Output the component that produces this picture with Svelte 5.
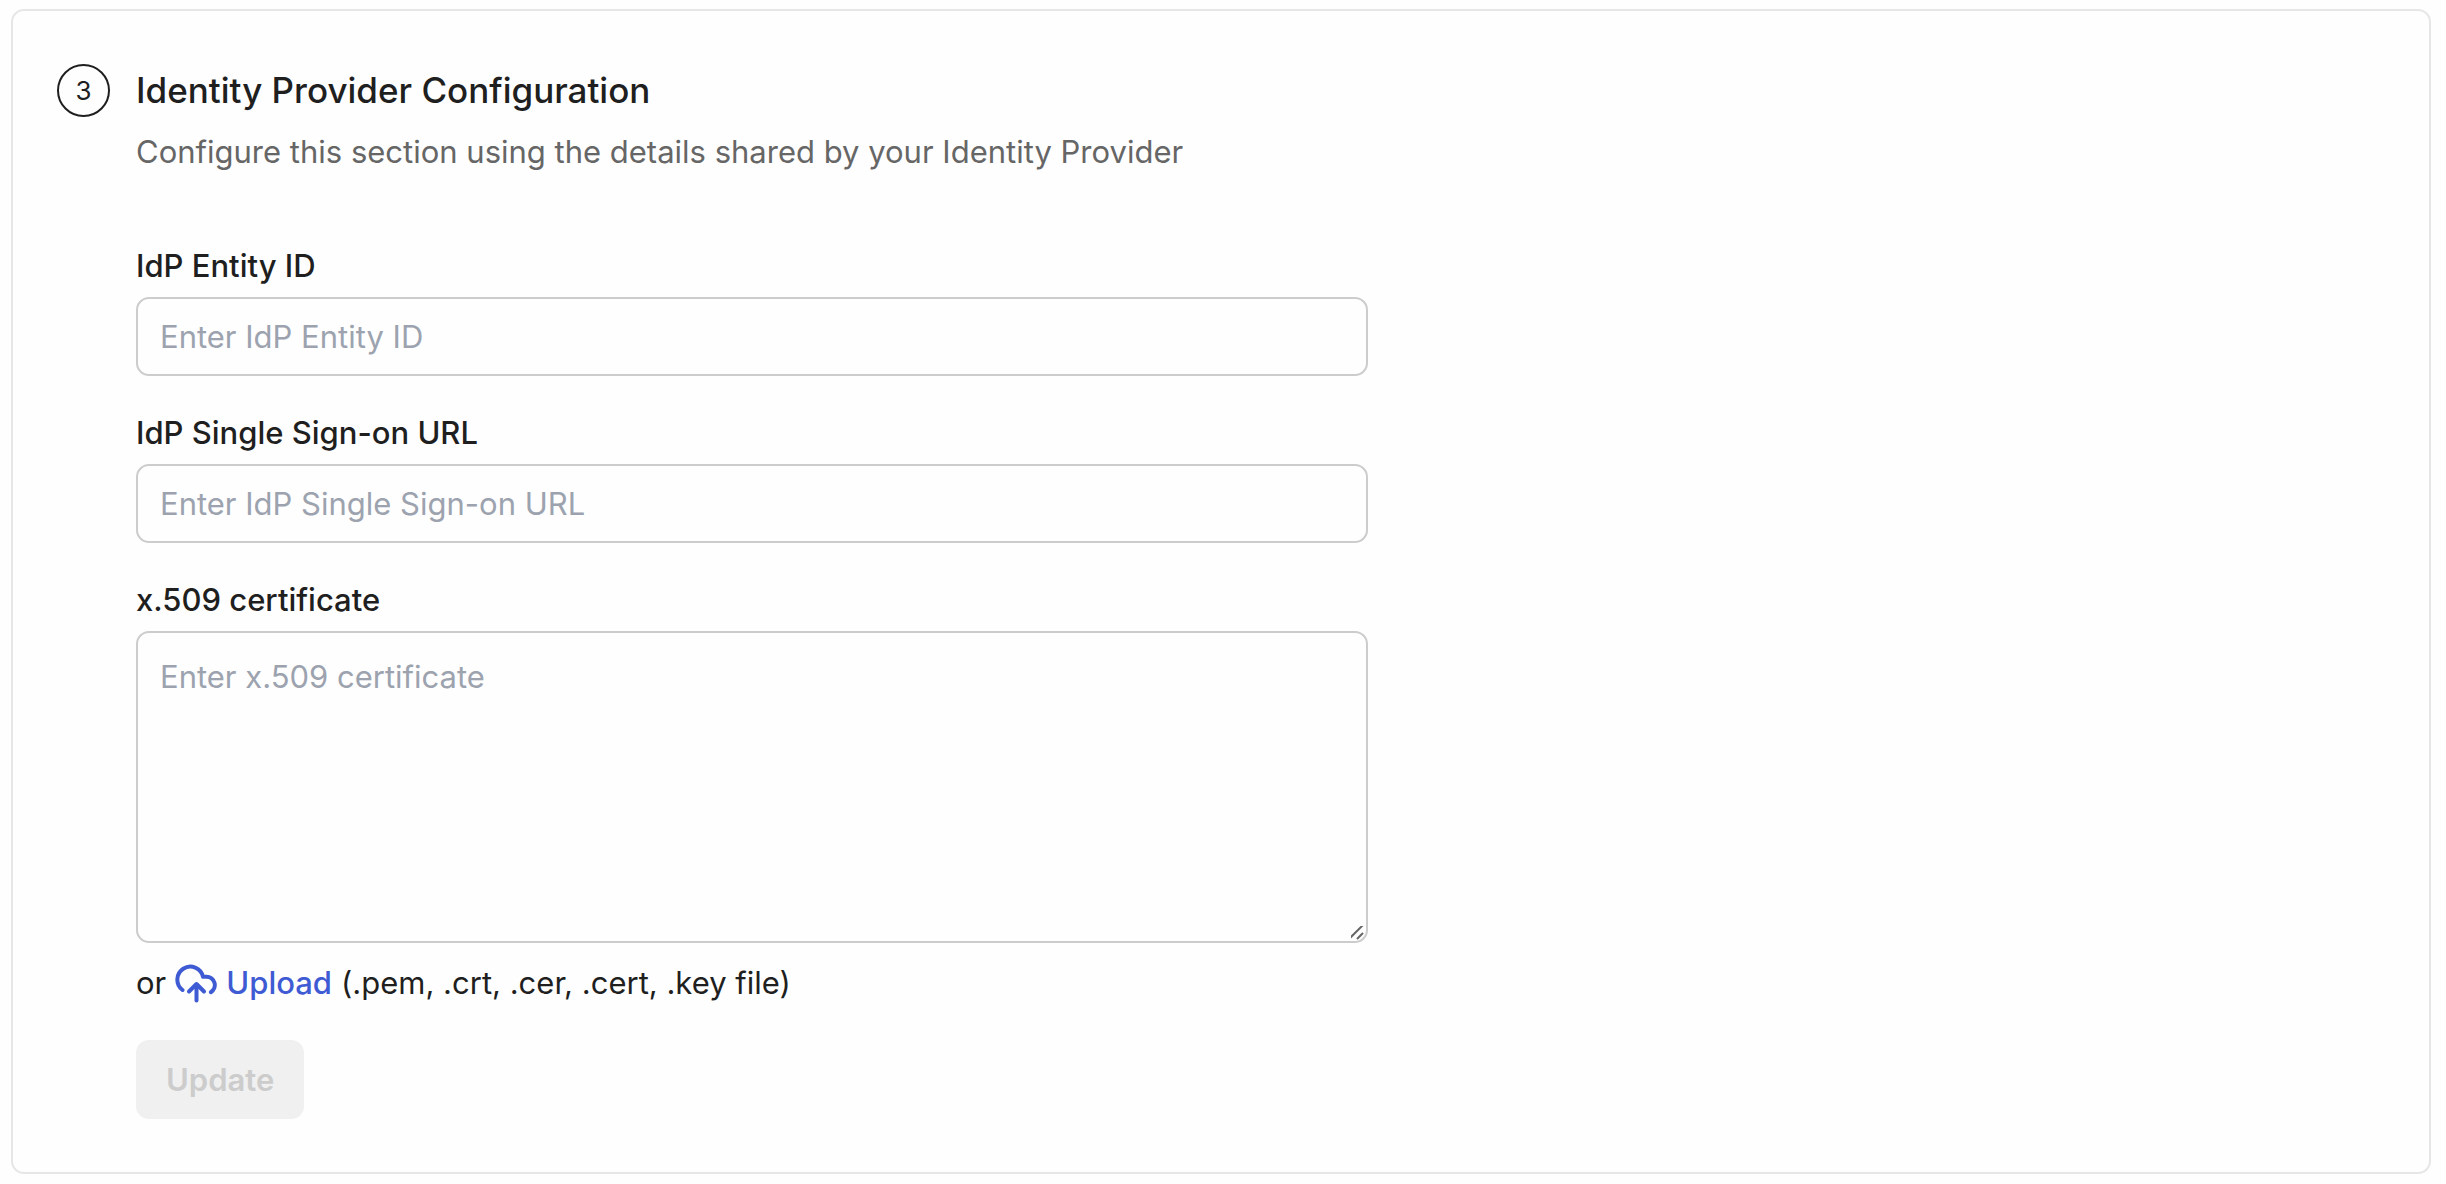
<script lang="ts">
  let entityId = $state('');
  let signOnUrl = $state('');
  let certificate = $state('');
  let fileInput: HTMLInputElement;

  const canUpdate = $derived(
    entityId.trim() !== '' && signOnUrl.trim() !== '' && certificate.trim() !== ''
  );

  async function readCertificate() {
    const file = fileInput.files?.[0];
    if (file) {
      certificate = await file.text();
    }
  }
</script>

<section class="card">
  <div class="step">3</div>

  <div class="content">
    <h2>Identity Provider Configuration</h2>
    <p class="description">
      Configure this section using the details shared by your Identity Provider
    </p>

    <form onsubmit={(e) => e.preventDefault()}>
      <div class="field">
        <label for="entity-id">IdP Entity ID</label>
        <input id="entity-id" type="text" placeholder="Enter IdP Entity ID" bind:value={entityId} />
      </div>

      <div class="field">
        <label for="sign-on-url">IdP Single Sign-on URL</label>
        <input
          id="sign-on-url"
          type="text"
          placeholder="Enter IdP Single Sign-on URL"
          bind:value={signOnUrl}
        />
      </div>

      <div class="field">
        <label for="certificate">x.509 certificate</label>
        <textarea id="certificate" placeholder="Enter x.509 certificate" bind:value={certificate}
        ></textarea>
      </div>

      <div class="upload-row">
        <span>or</span>
        <button type="button" class="upload" onclick={() => fileInput.click()}>
          <svg viewBox="0 0 42 40" aria-hidden="true">
            <path d="M7.5 27A13 13 0 1 1 28 13.7L31.5 13.7A8.4 8.4 0 0 1 35.9 29.2" />
            <path d="M21.5 37.5V21.5M14 28.5L21.5 21L29 28.5" />
          </svg>
          Upload
        </button>
        <span>(.pem, .crt, .cer, .cert, .key file)</span>
        <input
          bind:this={fileInput}
          type="file"
          accept=".pem,.crt,.cer,.cert,.key"
          hidden
          onchange={readCertificate}
        />
      </div>

      <button type="submit" class="update" disabled={!canUpdate}>Update</button>
    </form>
  </div>
</section>

<style>
  :global(body) {
    background: #fefefe;
    color: #1f1f1f;
    font-family: Inter, 'Liberation Sans', sans-serif;
    font-size: 31px;
    line-height: 40px;
  }

  .card {
    display: flex;
    gap: 26px;
    margin: 9px 15px 10px 11px;
    padding: 53px 44px;
    border: 2px solid #e6e6e6;
    border-radius: 13px;
  }

  .step {
    box-sizing: border-box;
    flex: none;
    display: flex;
    align-items: center;
    justify-content: center;
    width: 53px;
    height: 53px;
    border: 2px solid #1f1f1f;
    border-radius: 50%;
    font-size: 26px;
  }

  .content {
    flex: 1;
    min-width: 0;
  }

  h2 {
    margin: 0;
    font-size: 35px;
    font-weight: 500;
    line-height: 53px;
  }

  .description {
    margin: 15px 0 0;
    color: #666;
  }

  form {
    display: flex;
    flex-direction: column;
    align-items: flex-start;
    margin-top: 74px;
  }

  .field {
    display: flex;
    flex-direction: column;
    gap: 11px;
    width: 100%;
    max-width: 1232px;
    margin-bottom: 37px;
  }

  label {
    font-weight: 500;
  }

  .field input,
  textarea {
    box-sizing: border-box;
    width: 100%;
    height: 79px;
    padding: 0 22px;
    border: 2px solid #ccc;
    border-radius: 13px;
    background: transparent;
    color: inherit;
    font: inherit;
  }

  textarea {
    display: block;
    height: 312px;
    padding: 24px 22px;
    resize: vertical;
  }

  textarea::-webkit-scrollbar {
    width: 20px;
  }

  textarea::-webkit-resizer {
    background: url("data:image/svg+xml,%3Csvg xmlns='http://www.w3.org/2000/svg' width='20' height='20'%3E%3Cpath d='M3 18L17 4M11 18L17 12' stroke='%23666' stroke-width='2'/%3E%3C/svg%3E")
      no-repeat right bottom;
  }

  .field input::placeholder,
  textarea::placeholder {
    color: #9ca3af;
    opacity: 1;
  }

  .upload-row {
    display: flex;
    align-items: center;
    gap: 9px;
    margin-top: -17px;
  }

  .upload {
    display: flex;
    align-items: center;
    gap: 9px;
    padding: 0;
    border: 0;
    background: none;
    color: #3e5bd3;
    font: inherit;
    font-weight: 500;
    cursor: pointer;
  }

  .upload svg {
    width: 42px;
    height: 40px;
    fill: none;
    stroke: currentColor;
    stroke-width: 4;
    stroke-linecap: round;
    stroke-linejoin: round;
  }

  .update {
    height: 79px;
    margin-top: 37px;
    padding: 0 30px;
    border: 0;
    border-radius: 13px;
    background: #3e5bd3;
    color: #fff;
    font: inherit;
    font-weight: 600;
    cursor: pointer;
  }

  .update:disabled {
    background: #f0f0f0;
    color: #ccc;
    cursor: default;
  }
</style>
